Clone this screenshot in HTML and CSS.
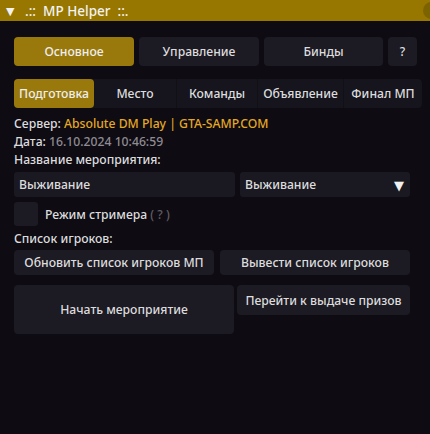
FILE: index.html
```html
<!DOCTYPE html>
<html lang="ru">
<head>
<meta charset="utf-8">
<link rel="stylesheet" href="styles.css">
</head>
<body>
<div class="window">
  <div class="titlebar">
    <span class="arrow">▼</span>
    <span class="title">.::&nbsp; MP Helper &nbsp;::.</span>
    <span class="close"></span>
  </div>
  <div class="content">
    <div class="tabs">
      <div class="btn gold w120">Основное</div>
      <div class="btn w120">Управление</div>
      <div class="btn w119">Бинды</div>
      <div class="btn w29">?</div>
    </div>
    <div class="subtabs">
      <div class="sub gold s1">Подготовка</div>
      <div class="sub s2">Место</div>
      <div class="sub s3">Команды</div>
      <div class="sub s4">Объявление</div>
      <div class="sub s5">Финал МП</div>
    </div>
    <div class="info">
      <div class="line">Сервер: <span class="yellow">Absolute DM Play | GTA-SAMP.COM</span></div>
      <div class="line">Дата: <span class="grey">16.10.2024 10:46:59</span></div>
      <div class="line">Название мероприятия:</div>
    </div>
    <div class="inputs">
      <div class="field input">Выживание</div>
      <div class="field combo"><span>Выживание</span><span class="tri">▼</span></div>
    </div>
    <div class="checkrow">
      <div class="check"></div>
      <span>Режим стримера <span class="hint">( ? )</span></span>
    </div>
    <div class="line list">Список игроков:</div>
    <div class="row1">
      <div class="btn b200">Обновить список игроков МП</div>
      <div class="btn b190">Вывести список игроков</div>
    </div>
    <div class="row2">
      <div class="btn big">Начать мероприятие</div>
      <div class="btn prize">Перейти к выдаче призов</div>
    </div>
  </div>
</div>
</body>
</html>
```
FILE: styles.css
```css
html, body {
  margin: 0;
  padding: 0;
  background: #0e0b12;
}
body {
  width: 430px;
  height: 434px;
  overflow: hidden;
  font-family: "Noto Sans", "DejaVu Sans", sans-serif;
  font-size: 12.2px;
  font-weight: 500;
  color: #dcdcde;
}
.window {
  width: 430px;
  height: 434px;
  background: #0e0b12;
}
.titlebar {
  height: 21px;
  background: #977700;
  display: flex;
  align-items: center;
  overflow: hidden;
  color: #f2f2f2;
}
.arrow {
  font-size: 11px;
  margin-left: 6px;
  width: 19px;
}
.title {
  font-size: 13.5px;
  white-space: pre;
  flex: 1;
}
.close {
  width: 17px;
  height: 17px;
  border-radius: 50%;
  background: #7d6300;
  margin-right: -10px;
}
.content {
  padding: 16px 0 0 14px;
}
.tabs {
  display: flex;
  gap: 5px;
  height: 29px;
}
.btn {
  background: #1c1a22;
  border-radius: 4px;
  display: flex;
  align-items: center;
  justify-content: center;
  white-space: nowrap;
}
.gold {
  background: #9a790c;
  color: #eee;
}
.w120 { width: 120px; }
.w119 { width: 119px; }
.w29 { width: 29px; }
.subtabs {
  display: flex;
  margin-top: 13px;
  height: 29px;
  width: 408px;
  background: #16141c;
  border-radius: 4px;
}
.sub {
  display: flex;
  align-items: center;
  justify-content: center;
  white-space: nowrap;
  border-right: 1px solid #121017;
}
.sub.gold { border-radius: 4px; border-right: none; }
.s5 { border-right: none; }
.s1 { width: 80px; }
.s2 { width: 82px; }
.s3 { width: 80px; }
.s4 { width: 85px; }
.s5 { width: 78px; }
.info {
  margin-top: 7px;
}
.line {
  height: 18px;
  line-height: 18px;
  white-space: nowrap;
}
.yellow { color: #e3a824; }
.grey { color: #8e8c92; }
.inputs {
  display: flex;
  gap: 5px;
  margin-top: 3px;
  height: 25px;
}
.field {
  background: #1a1820;
  border-radius: 3px;
  display: flex;
  align-items: center;
  padding: 0 5px;
  box-sizing: border-box;
}
.input { width: 221px; }
.combo {
  width: 170px;
  justify-content: space-between;
  padding-right: 6px;
}
.tri { font-size: 13px; color: #f0f0f0; }
.checkrow {
  display: flex;
  align-items: center;
  gap: 7px;
  margin-top: 5px;
  height: 24px;
}
.check {
  width: 24px;
  height: 24px;
  background: #1c1a22;
  border-radius: 3px;
}
.hint { color: #5f5d64; }
.list {
  margin-top: 4px;
}
.row1 {
  display: flex;
  gap: 6px;
  margin-top: 2px;
  height: 25px;
}
.b200 { width: 200px; }
.b190 { width: 190px; }
.row2 {
  display: flex;
  gap: 3px;
  margin-top: 10px;
  align-items: flex-start;
}
.big { width: 220px; height: 49px; }
.prize { width: 173px; height: 30px; }
```
